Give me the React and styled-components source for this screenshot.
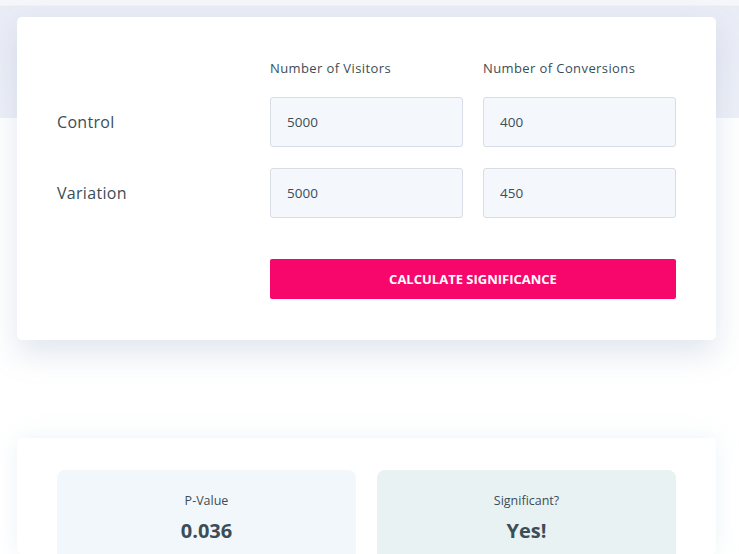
import styled, {createGlobalStyle} from 'styled-components';

const GlobalStyle = createGlobalStyle`
  body {
    margin: 0;
    font-family: 'Open Sans', 'Noto Sans', sans-serif;
    color: #3c4d56;
    background: #fff linear-gradient(to bottom, #f4f6fa 0, #f4f6fa 5px, #e9ecf5 6px, #edf0f7 118px, #fff 118px) no-repeat;
  }
`;

const Page = styled.div`
  padding: 17px 23px 0 17px;
  display: flex;
  flex-direction: column;
  gap: 98px;
`;

const Card = styled.section`
  background: #fff;
  border-radius: 5px;
  box-shadow: ${p => p.$soft
    ? '0 0 22px rgba(200, 220, 230, 0.35)'
    : '0 14px 30px rgba(120, 140, 180, 0.22)'};
  padding: ${p => p.$soft ? '32px 40px 0' : '42px 41px 41px 40px'};
`;

const Grid = styled.div`
  display: grid;
  grid-template-columns: 193px 193px 193px;
  column-gap: 20px;
  row-gap: 21px;
  align-items: center;
`;

const ColHead = styled.div`
  font-size: 13px;
  letter-spacing: 0.4px;
  color: #3c4d56;
  margin-bottom: -1px;
`;

const RowLabel = styled.div`
  font-size: 16px;
  letter-spacing: 0.3px;
  color: #3c4d56;
`;

const Input = styled.input`
  box-sizing: border-box;
  width: 100%;
  height: 50px;
  padding: 0 16px;
  border: 1px solid #d8dce7;
  border-radius: 3px;
  background: #f4f8fc;
  font-family: inherit;
  font-size: 13.5px;
  color: #3c4d56;
  outline: none;
`;

const Button = styled.button`
  grid-column: 2 / 4;
  margin-top: 20px;
  height: 40px;
  border: none;
  border-radius: 2px;
  background: #f7076b;
  color: #fff;
  font-family: inherit;
  font-weight: 700;
  font-size: 13px;
  text-transform: uppercase;
  cursor: pointer;
`;

const Results = styled.div`
  display: grid;
  grid-template-columns: 1fr 1fr;
  gap: 21px;
`;

const ResultBox = styled.div`
  background: ${p => p.$tint};
  border-radius: 8px 8px 0 0;
  height: 84px;
  display: flex;
  flex-direction: column;
  align-items: center;
  padding-top: 22px;
  box-sizing: border-box;
`;

const ResultLabel = styled.div`
  font-size: 12.5px;
  color: #3c4d56;
`;

const ResultValue = styled.div`
  margin-top: 8px;
  font-size: 20px;
  font-weight: 700;
  color: #3c4d56;
`;

const App = () => (
  <>
    <GlobalStyle/>
    <Page>
      <Card>
        <Grid>
          <span/>
          <ColHead>Number of Visitors</ColHead>
          <ColHead>Number of Conversions</ColHead>

          <RowLabel>Control</RowLabel>
          <Input defaultValue="5000"/>
          <Input defaultValue="400"/>

          <RowLabel>Variation</RowLabel>
          <Input defaultValue="5000"/>
          <Input defaultValue="450"/>

          <span/>
          <Button>Calculate Significance</Button>
        </Grid>
      </Card>
      <Card $soft>
        <Results>
          <ResultBox $tint="#f2f7fb">
            <ResultLabel>P-Value</ResultLabel>
            <ResultValue>0.036</ResultValue>
          </ResultBox>
          <ResultBox $tint="#e8f2f3">
            <ResultLabel>Significant?</ResultLabel>
            <ResultValue>Yes!</ResultValue>
          </ResultBox>
        </Results>
      </Card>
    </Page>
  </>
);

export default App;
